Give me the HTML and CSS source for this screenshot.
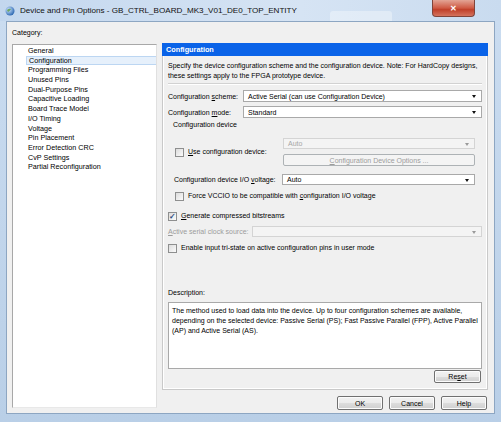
FILE: index.html
```html
<!DOCTYPE html>
<html>
<head>
<meta charset="utf-8">
<link rel="stylesheet" href="styles.css">
</head>
<body>
<div class="window">
  <div class="titlebar">
    <svg class="appicon" width="10" height="10" viewBox="0 0 10 10">
      <defs><radialGradient id="g" cx="0.35" cy="0.35" r="0.7"><stop offset="0" stop-color="#cfe6ff"/><stop offset="1" stop-color="#2a66b0"/></radialGradient></defs>
      <circle cx="5" cy="5" r="4.5" fill="url(#g)"/>
      <path d="M2 4 Q4 2 6 3 Q5 5 3 6 Z" fill="#5a9a3a" opacity="0.8"/>
    </svg>
    <span class="title">Device and Pin Options - GB_CTRL_BOARD_MK3_V01_DE0_TOP_ENTITY</span>
    <div class="ghost"></div>
    <div class="closebtn"><span>✕</span></div>
  </div>
  <div class="client">
    <div class="catlabel">Category:</div>
    <div class="main">
      <ul class="tree">
        <li>General</li>
        <li class="sel">Configuration</li>
        <li>Programming Files</li>
        <li>Unused Pins</li>
        <li>Dual-Purpose Pins</li>
        <li>Capacitive Loading</li>
        <li>Board Trace Model</li>
        <li>I/O Timing</li>
        <li>Voltage</li>
        <li>Pin Placement</li>
        <li>Error Detection CRC</li>
        <li>CvP Settings</li>
        <li>Partial Reconfiguration</li>
      </ul>
      <div class="right">
        <div class="panel">
          <div class="phead">Configuration</div>
          <div class="pbody">
            <p class="intro">Specify the device configuration scheme and the configuration device. Note: For HardCopy designs,<br>these settings apply to the FPGA prototype device.</p>
            <div class="sep"></div>
            <div class="row r-scheme">
              <span class="lbl w75">Configuration <u>s</u>cheme:</span>
              <div class="combo grow"><span>Active Serial (can use Configuration Device)</span><i class="arrow"></i></div>
            </div>
            <div class="row r-mode">
              <span class="lbl w75">Configuration <u>m</u>ode:</span>
              <div class="combo grow"><span>Standard</span><i class="arrow"></i></div>
            </div>
            <div class="grouptitle">Configuration device</div>
            <div class="group">
              <div class="usedev">
                <label class="chk"><span class="box"></span><span><u>U</u>se configuration device:</span></label>
                <div class="devcol">
                  <div class="combo dis"><span>Auto</span><i class="arrow"></i></div>
                  <div class="btn dis wide"><span><u>C</u>onfiguration Device Options ...</span></div>
                </div>
              </div>
              <div class="row r-io">
                <span class="lbl w108">Configuration device I/O <u>v</u>oltage:</span>
                <div class="combo grow"><span>Auto</span><i class="arrow"></i></div>
              </div>
              <label class="chk r-force"><span class="box"></span><span>Force VCCIO to be compatible with <u>c</u>onfiguration I/O voltage</span></label>
            </div>
            <label class="chk r-gen"><span class="box checked">✓</span><span><u>G</u>enerate compressed bitstreams</span></label>
            <div class="row r-asc">
              <span class="lbl w84 distext"><u>A</u>ctive serial clock source:</span>
              <div class="combo grow dis"><span></span><i class="arrow"></i></div>
            </div>
            <label class="chk r-tri"><span class="box"></span><span>Enable input tri-state on active configuration pins in user mode</span></label>
            <div class="desc">
              <div class="desclbl">Description:</div>
              <div class="textarea">The method used to load data into the device. Up to four configuration schemes are available,<br>depending on the selected device: Passive Serial (PS); Fast Passive Parallel (FPP), Active Parallel<br>(AP) and Active Serial (AS).</div>
              <div class="resetrow"><div class="btn">Re<u>s</u>et</div></div>
            </div>
          </div>
        </div>
        <div class="buttons">
          <div class="btn">OK</div>
          <div class="btn">Cancel</div>
          <div class="btn">Help</div>
        </div>
      </div>
    </div>
  </div>
</div>
</body>
</html>
```
FILE: styles.css
```css
* { box-sizing: border-box; }
html, body { margin: 0; padding: 0; }
body {
  width: 501px; height: 422px; overflow: hidden;
  font-family: "Liberation Sans", Arial, sans-serif;
  font-size: 7px; color: #000;
  background: linear-gradient(to bottom, #bcd2ea 0px, #cadcf0 20px, #b9cfe7 100%);
}
.window { display: flex; flex-direction: column; height: 422px; }
.titlebar {
  height: 21px; display: flex; align-items: center; padding-left: 5px; position: relative;
  background: linear-gradient(to right, #c3d7ee, #d6e4f4 60%, #c9dbef);
}
.appicon { margin-right: 5px; }
.title { font-size: 8.1px; color: #111; }
.ghost {
  position: absolute; left: 330px; top: 11px; width: 62px; height: 10px;
  border-radius: 3px 3px 0 0; background: rgba(255,255,255,0.35);
}
.closebtn {
  position: absolute; right: 26px; top: 0; width: 43px; height: 17px;
  border-radius: 0 0 4px 4px;
  background: linear-gradient(to bottom, #e3a495, #cf5a44 50%, #c0402a 60%, #d4735e);
  border: 1px solid #80443a; border-top: none;
  display: flex; align-items: center; justify-content: center;
  color: #fff; font-size: 8px; font-weight: bold;
}
.client {
  flex: 1; margin: 0 6px 8px 6px; background: #f0f0f0;
  border: 1px solid #8da6c2;
  padding: 6px 6px 3px 5px;
  display: flex; flex-direction: column; min-width: 0;
}
.catlabel { line-height: 10px; height: 15px; }
.main { display: grid; grid-template-columns: 145px minmax(0, 1fr); column-gap: 5px; flex: 1; }
.tree {
  list-style: none; margin: 1px 0 2px 0; padding: 1px 0 0 13px;
  background: #fff; border: 1px solid #a8a8a8; border-right-color: #e0e0e0; border-bottom-color: #e8e8e8;
}
.tree li { height: 9.7px; line-height: 9.7px; padding-left: 2px; white-space: nowrap; font-size: 7.2px; }
.tree li.sel { background: #e6f0fb; border: 1px solid #bcd6f2; line-height: 7.7px; border-right: none; }
.right { display: flex; flex-direction: column; min-width: 0; }
.panel { height: 347px; display: flex; flex-direction: column; }
.phead {
  height: 13px; line-height: 13px; background: #0a63e8; color: #fff; font-weight: bold;
  padding-left: 4px; font-size: 7.3px;
}
.pbody {
  flex: 1; border: 1px solid #c9c9c9; border-top: none;
  box-shadow: inset 1px 0 0 #fff, inset -1px -1px 0 #fff;
  padding: 5px 5px 6px 5px; display: flex; flex-direction: column; min-width: 0;
}
.intro { margin: 0; line-height: 10px; white-space: nowrap; }
.sep { height: 2px; border-top: 1px solid #d2d2d2; border-bottom: 1px solid #fff; margin-top: 2px; }
.row { display: flex; align-items: center; }
.lbl { white-space: nowrap; flex: none; }
.w75 { width: 75px; }
.w84 { width: 84px; }
.w108 { width: 108px; }
.grow { flex: 1; min-width: 0; }
.r-scheme { margin-top: 5px; }
.r-mode { margin-top: 4px; }
.combo {
  height: 12px; border: 1px solid #a9a9a9; background: #fff; position: relative;
  display: flex; align-items: center; padding-left: 4px; white-space: nowrap;
}
.combo .arrow {
  position: absolute; right: 5px; top: 4px; width: 0; height: 0;
  border-left: 2.5px solid transparent; border-right: 2.5px solid transparent; border-top: 3px solid #111;
}
.combo.dis { background: #f4f4f4; border-color: #d4d4d4; color: #a6a6a6; }
.combo.dis .arrow { border-top-color: #9a9a9a; }
.distext { color: #9c9c9c; }
.grouptitle { margin-top: 2px; padding-left: 5px; line-height: 10px; }
.group { padding: 8px 7px 4px 6px; }
.usedev { display: grid; grid-template-columns: 109px minmax(0, 1fr); align-items: center; }
.devcol { display: flex; flex-direction: column; gap: 5px; }
.devcol .combo { height: 11px; }
.chk { display: flex; align-items: center; white-space: nowrap; line-height: 10px; }
.box {
  width: 9px; height: 9px; border: 1px solid #8e8f8f; margin-right: 4px; flex: none;
  background: linear-gradient(135deg, #dcdcdc, #fbfbfb);
  font-size: 8px; line-height: 7px; text-align: center; color: #2b4a80; font-weight: bold;
}
.usedev .chk { padding-left: 1px; }
.r-io { margin-top: 8px; }
.r-io .combo { height: 11px; }
.r-force { margin-top: 6px; padding-left: 1px; }
.r-gen { margin-top: 6px; }
.r-asc { margin-top: 5px; }
.r-asc .combo { height: 11px; }
.r-tri { margin-top: 6px; }
.desc { margin-top: auto; }
.desclbl { line-height: 10px; }
.textarea {
  margin-top: 4px; height: 67px; background: #fff; border: 1px solid #a9a9a9;
  padding: 3px 2px 3px 3px; line-height: 10px; white-space: nowrap; overflow: hidden;
}
.resetrow { display: flex; justify-content: flex-end; margin-top: 1px; padding-right: 1px; }
.btn {
  width: 47px; height: 13px; border: 1px solid #707070; border-radius: 2px;
  background: linear-gradient(to bottom, #f2f2f2 0%, #ebebeb 50%, #dddddd 51%, #cfcfcf 100%);
  display: flex; align-items: center; justify-content: center; white-space: nowrap;
  box-shadow: inset 0 0 0 1px #fcfcfc;
}
.btn.wide { width: auto; height: 12px; }
.btn.dis { border-color: #adb2b5; color: #9c9c9c; background: #f4f4f4; box-shadow: none; }
.buttons { display: flex; justify-content: flex-end; gap: 6px; margin-top: 6px; padding-right: 1px; }
.buttons .btn { width: 46px; height: 14px; }
```
